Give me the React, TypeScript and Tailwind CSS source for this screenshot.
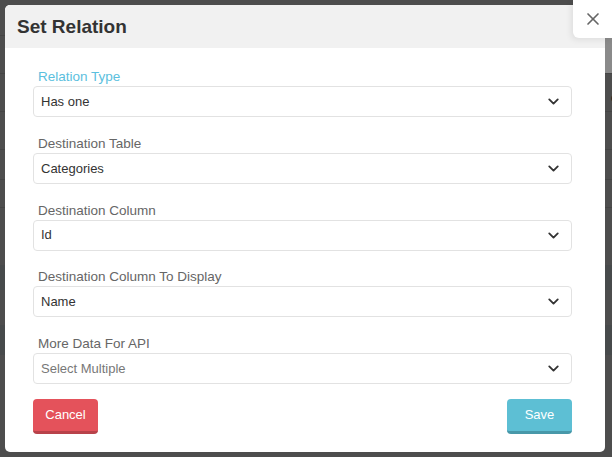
import { X, ChevronDown } from 'lucide-react';

const fields = [
    { label: 'Relation Type', value: 'Has one', active: true },
    { label: 'Destination Table', value: 'Categories' },
    { label: 'Destination Column', value: 'Id' },
    { label: 'Destination Column To Display', value: 'Name' },
    { label: 'More Data For API', value: 'Select Multiple', placeholder: true },
];

function SelectField({ label, value, active, placeholder }: { label: string; value: string; active?: boolean; placeholder?: boolean }) {
    return (
        <div className="flex flex-col">
            <label className={`pl-[5px] text-[13.5px] leading-[17px] ${active ? 'text-[#5bc0de]' : 'text-[#666]'}`}>
                {label}
            </label>
            <div className="mt-[1px] h-[31px] flex items-center justify-between rounded-[4px] border border-[#e2e2e2] bg-white pl-[7px] pr-[9px]">
                <span className={`text-[13px] ${placeholder ? 'text-[#777]' : 'text-[#333]'}`}>{value}</span>
                <ChevronDown size={17} strokeWidth={2.6} className="text-[#333]" />
            </div>
        </div>
    );
}

export default function App() {
    return (
        <div className="relative w-[612px] h-[457px] overflow-hidden bg-[#4d4d4d] font-['Liberation_Sans',Arial,sans-serif]">
            {/* page behind the overlay */}
            <div className="flex flex-col">
                <div className="h-[36px] border-b border-[#444]" />
                <div className="h-[38px] border-b border-[#444] flex justify-end">
                    <div className="w-[8px] bg-[#8a8a8a]" />
                </div>
                <div className="h-[38px] border-b border-[#444] flex justify-end items-end pb-[4px] text-[13px] text-[#222]">
                    <span className="-mr-[6px]">e</span>
                </div>
                <div className="h-[38px] border-b border-[#444]" />
                <div className="h-[30px] border-b border-[#444]" />
                <div className="h-[28px] border-b border-[#444]" />
                <div className="h-[57px]" />
                <div className="h-[25px] bg-[#474a4b]" />
                <div className="h-[35px]" />
                <div className="h-[30px] bg-[#474a4b]" />
            </div>

            {/* modal */}
            <div className="absolute left-[5px] top-[5px] w-[600px] h-[447px] rounded-[5px] bg-white flex flex-col overflow-hidden">
                <div className="h-[43px] shrink-0 bg-[#f1f1f1] flex items-center pl-[12px]">
                    <h2 className="text-[19px] font-bold text-[#333] leading-none">Set Relation</h2>
                </div>
                <div className="flex flex-col gap-[17.75px] pt-[20px] pl-[28px] pr-[33px]">
                    {fields.map(f => (
                        <SelectField key={f.label} {...f} />
                    ))}
                </div>
                <div className="flex justify-between pl-[28px] pr-[33px] pt-[15px]">
                    <button className="w-[65px] h-[35px] rounded-[4px] bg-[#e4525b] border-b-[3px] border-[#b8424a] text-white text-[13px]">
                        Cancel
                    </button>
                    <button className="w-[65px] h-[35px] rounded-[4px] bg-[#5dbfd4] border-b-[3px] border-[#4898a9] text-white text-[13px]">
                        Save
                    </button>
                </div>
            </div>

            {/* close button */}
            <button className="absolute right-0 top-0 w-[39px] h-[38px] bg-white rounded-bl-[6px] flex items-center justify-center shadow-[-2px_2px_6px_rgba(0,0,0,0.08)]">
                <X size={20} strokeWidth={2} className="text-[#666]" />
            </button>
        </div>
    );
}
